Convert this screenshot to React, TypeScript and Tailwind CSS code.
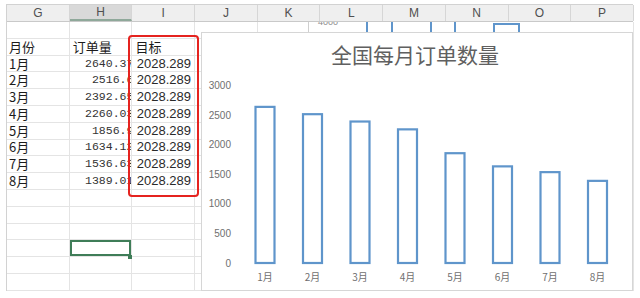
const cols = ['G', 'H', 'I', 'J', 'K', 'L', 'M', 'N', 'O', 'P']
const months = ['1月', '2月', '3月', '4月', '5月', '6月', '7月', '8月']
const orders = ['2640.37', '2516.6', '2392.65', '2260.03', '1856.9', '1634.12', '1536.63', '1389.01']
const values = [2640.37, 2516.6, 2392.65, 2260.03, 1856.9, 1634.12, 1536.63, 1389.01]

const cjk = '"Noto Sans CJK SC", sans-serif'
const sans = '"Liberation Sans", Arial, sans-serif'

function Cell({ children, className = '' }: { children?: React.ReactNode; className?: string }) {
  return (
    <div
      className={`relative w-[62.7px] h-[16.8px] shrink-0 border-r border-b border-[#e4e4e4] overflow-hidden flex items-center ${className}`}
    >
      {children}
    </div>
  )
}

function Row({ index }: { index: number }) {
  const di = index - 2
  const isHead = index === 1
  const isData = di >= 0 && di < 8
  return (
    <div className="flex">
      <Cell className="pl-[2px] text-[13px] leading-[16px] text-[#1c1c1c] font-['Noto_Sans_CJK_SC',sans-serif]">
        {isHead ? '月份' : isData ? months[di] : null}
      </Cell>
      <Cell
        className={
          isHead
            ? "pl-[3px] text-[13px] leading-[16px] text-[#1c1c1c] font-['Noto_Sans_CJK_SC',sans-serif]"
            : 'justify-end'
        }
      >
        {isHead && '订单量'}
        {isData && (
          <span className="shrink-0 -mr-[2px] text-[11.5px] leading-[16px] text-[#333] font-['Liberation_Mono',monospace]">
            {orders[di]}
          </span>
        )}
        {index === 13 && (
          <div className="absolute inset-0 border-2 border-[#3f7d58]" />
        )}
      </Cell>
      <Cell
        className={
          isHead
            ? "pl-[3px] text-[13px] leading-[16px] text-[#1c1c1c] font-['Noto_Sans_CJK_SC',sans-serif]"
            : "justify-end pr-[3px] text-[13px] leading-[16px] text-[#2a2a2a] font-['Liberation_Sans',Arial,sans-serif]"
        }
      >
        {isHead ? '目标' : isData ? '2028.289' : null}
      </Cell>
      {cols.slice(3).map((c) => (
        <Cell key={c} />
      ))}
    </div>
  )
}

function Chart() {
  const base = 230
  const scale = 0.05913
  return (
    <svg width="430" height="257" className="block">
      <text x="213" y="30" textAnchor="middle" fontSize="21" fill="#606060" fontFamily={cjk}>
        全国每月订单数量
      </text>
      {[0, 1, 2, 3, 4, 5, 6].map((k) => (
        <text
          key={k}
          x="29"
          y={base - 29.57 * k + 3.5}
          textAnchor="end"
          fontSize="10"
          fill="#6f6f6f"
          fontFamily={sans}
        >
          {k * 500}
        </text>
      ))}
      {values.map((v, i) => {
        const cx = 63 + 47.5 * i
        const h = v * scale
        return (
          <g key={i}>
            <rect
              x={cx - 9.5}
              y={base - h}
              width="19"
              height={h}
              fill="#fff"
              stroke="#5f95cb"
              strokeWidth="2.2"
            />
            <text x={cx} y="248" textAnchor="middle" fontSize="10" fill="#6f6f6f" fontFamily={cjk}>
              {months[i]}
            </text>
          </g>
        )
      })}
    </svg>
  )
}

export default function App() {
  return (
    <div className="relative w-[640px] h-[298px] bg-white overflow-hidden">
      <div className="ml-[6px] mt-[4px] w-[627px] border-l border-t border-[#d2d2d2]">
        <div className="flex h-[17px] border-b border-[#c9c9c9] bg-[#efefef]">
          {cols.map((c) => (
            <div
              key={c}
              className={`w-[62.7px] shrink-0 border-r border-[#d6d6d6] flex items-center justify-center text-[12px] text-[#505050] font-['Liberation_Sans',Arial,sans-serif] ${
                c === 'H' ? 'bg-[#d9d9d9] border-b-2 border-b-[#8fa89a]' : ''
              }`}
            >
              {c}
            </div>
          ))}
        </div>
        {Array.from({ length: 16 }, (_, i) => (
          <Row key={i} index={i} />
        ))}
      </div>

      {/* fill handle of the selected cell */}
      <div className="absolute left-[128px] top-[255px] w-[4px] h-[4px] bg-[#3f7d58]" />

      {/* chart lying behind, only its bottom edge shows */}
      <div className="absolute left-[308px] top-[22px] w-[325px] h-[12px] bg-white border-l border-[#cfcfcf] overflow-hidden">
        <span className="absolute left-[9px] -top-[6px] text-[9px] text-[#8a8a8a] font-['Liberation_Sans',Arial,sans-serif]">
          4000
        </span>
        <svg width="325" height="12" className="absolute left-0 top-0">
          <g stroke="#5f95cb" strokeWidth="2" fill="none">
            <line x1="58" y1="0" x2="58" y2="12" />
            <line x1="83" y1="0" x2="83" y2="12" />
            <line x1="122" y1="0" x2="122" y2="12" />
            <line x1="146" y1="0" x2="146" y2="12" />
            <path d="M185 12 V2 H210 V12" />
          </g>
        </svg>
      </div>

      {/* main chart */}
      <div className="absolute left-[201px] top-[32px] w-[432px] h-[259px] bg-white border border-[#d6d6d6]">
        <Chart />
      </div>

      {/* red highlight around column I */}
      <div className="absolute left-[128px] top-[35px] w-[71px] h-[162px] border-[2.5px] border-[#e5231f] rounded-[4px]" />
    </div>
  )
}
